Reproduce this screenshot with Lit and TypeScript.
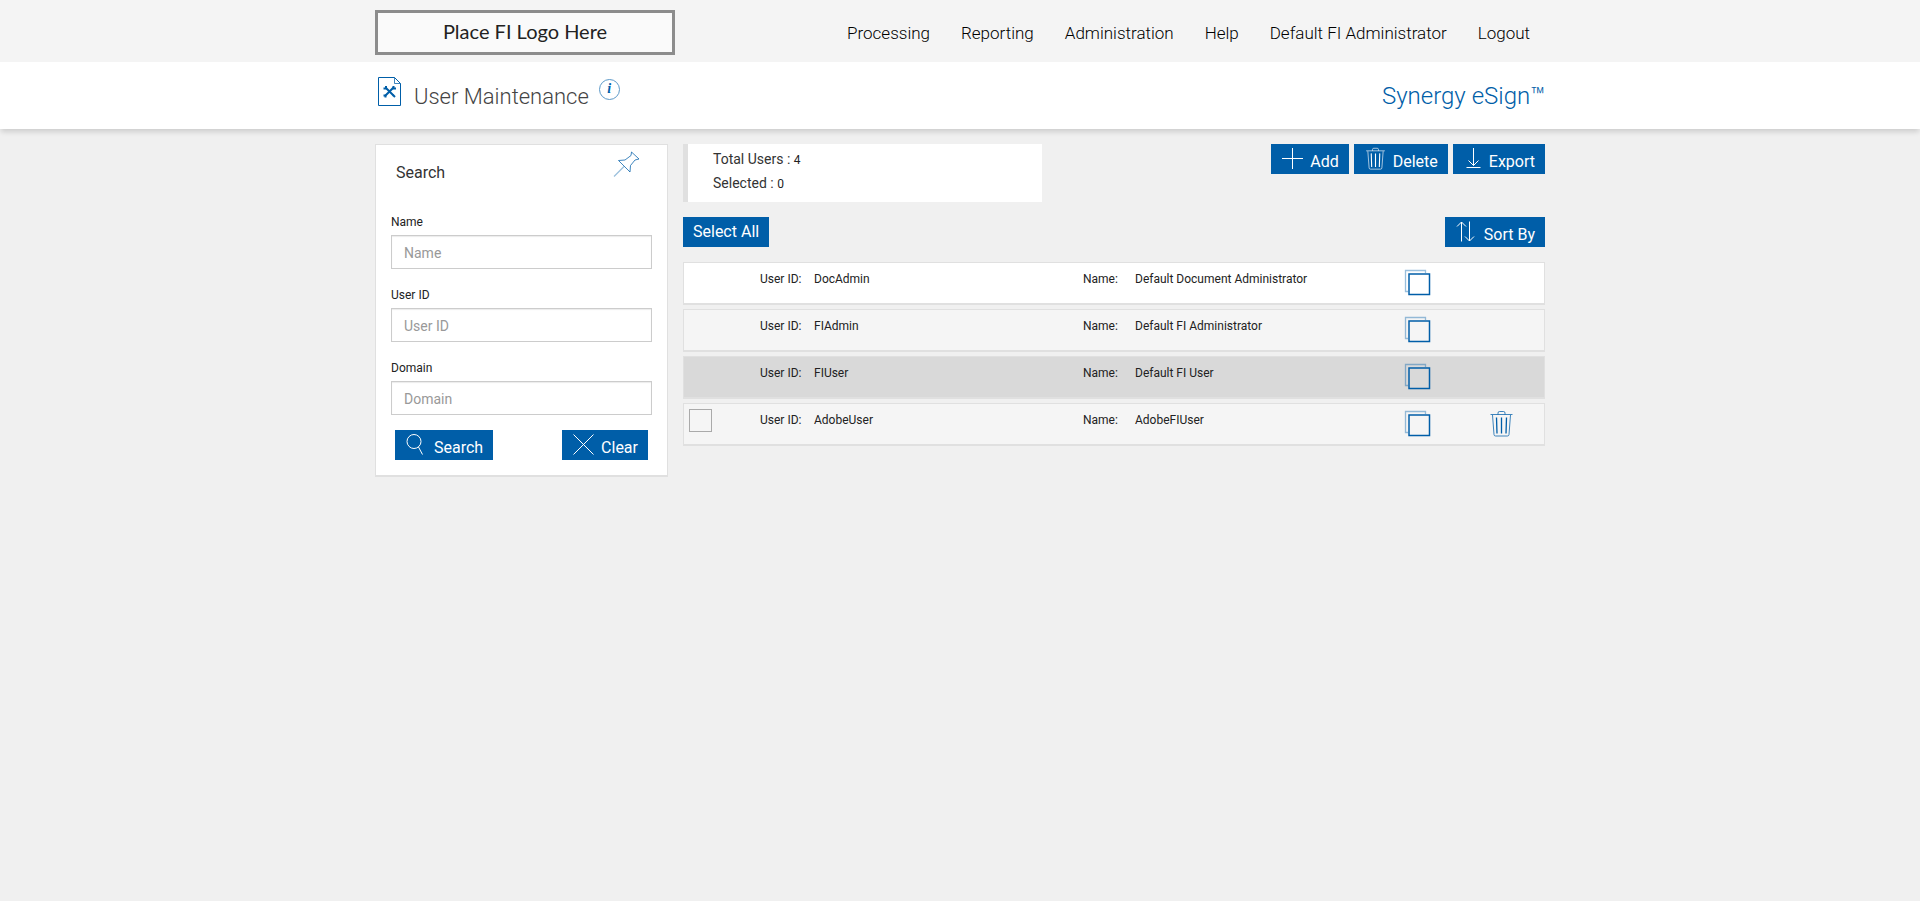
import { LitElement, html, css, svg, nothing } from "lit";
import { customElement, property, state } from "lit/decorators.js";
import { classMap } from "lit/directives/class-map.js";

interface User {
  id: string;
  name: string;
  removable: boolean;
  highlighted: boolean;
}

const USERS: User[] = [
  { id: "DocAdmin", name: "Default Document Administrator", removable: false, highlighted: false },
  { id: "FIAdmin", name: "Default FI Administrator", removable: false, highlighted: false },
  { id: "FIUser", name: "Default FI User", removable: false, highlighted: true },
  { id: "AdobeUser", name: "AdobeFIUser", removable: true, highlighted: false },
];

const GLYPHS = {
  plus: { box: "0 0 23 23", art: svg`<path d="M11.5 1v21M1 11.5h21"/>` },
  cross: { box: "0 0 23 23", art: svg`<path d="M1.5 1.5l20 20M21.500 1.500l-20 20"/>` },
  trash: {
    box: "0 0 23 27",
    art: svg`<path class="soft" d="M.5 4.500h22M8 4.500V3q0-1.500 1.500-1.500h4q1.500 0 1.500 1.500v1.500M2.500 5l1.500 19.500q.1 1.500 1.600 1.500h11.800q1.500 0 1.600-1.500L20.500 5"/><path class="strong" d="M6.500 7.500l.5 16M11.500 7.500v16M16.500 7.500l-.5 16"/>`,
  },
  download: { box: "0 0 23 23", art: svg`<path d="M10.500 1v17.500M5.500 13.500l5 5 5-5M3.500 20.500h14"/>` },
  sort: { box: "0 0 23 23", art: svg`<path d="M6.500 21.500V2M2 6.500L6.500 2l4.500 4.500M14.500 1.500V21M10 16.500l4.500 4.500 4.500-4.500"/>` },
  search: { box: "0 0 23 23", art: svg`<circle cx="9" cy="8.500" r="7"/><path d="M13.500 14l4 7.500"/>` },
  copy: {
    box: "0 0 27 27",
    art: svg`<path class="faint" d="M4 22.500H1.500V1.500h20V4"/><rect class="bold" x="5" y="5" width="20.500" height="20.500"/>`,
  },
  pin: {
    box: "0 0 27 27",
    art: svg`<path class="soft" d="M18.500 1l7.500 7-4 1-4.500 5.500-.5 6.500L5.500 9.500l6.500-.500L18 4.500z"/><path class="faint" d="M11 15.500L1 25.500"/>`,
  },
  page: {
    box: "0 0 24 30",
    art: svg`<path d="M.5 1.500h16l6 6v22H.5z"/><path class="soft" d="M16.500 1.500v6h6"/><path class="tool" d="M7.500 11.500l8 8M15.500 11.500l-8 8"/><path class="head" d="M5.500 12.500h2.500v-2.500M18 12.500h-2.500v-2.500M5.500 19.500h2v2M17 21l-2-2"/>`,
  },
};
type Glyph = keyof typeof GLYPHS;

@customElement("line-icon")
class LineIcon extends LitElement {
  @property() name: Glyph = "plus";
  @property({ type: Number }) width = 23;
  @property({ type: Number }) height = 23;

  static styles = css`
    :host { display: inline-flex; flex: none; }
    svg { display: block; fill: none; stroke: currentColor; stroke-width: 1; overflow: visible; }
    .soft { opacity: 0.75; }
    .faint { opacity: 0.4; stroke-width: 1.3; }
    .strong { stroke-width: 1.3; }
    .bold { stroke-width: 1.5; }
    .tool { stroke-width: 2; }
    .head { stroke-width: 2; }
  `;

  render() {
    const glyph = GLYPHS[this.name];
    return html`<svg width=${this.width} height=${this.height} viewBox=${glyph.box} aria-hidden="true">
      ${glyph.art}
    </svg>`;
  }
}

@customElement("app-root")
class AppRoot extends LitElement {
  @state() private selected = new Set<string>();

  static styles = css`
    :host {
      display: block;
      min-height: 100vh;
      background: #f0f0f0;
      color: #222;
      font-family: Roboto, "Liberation Sans", sans-serif;
      font-size: 12px;
      line-height: 16px;
    }
    * { box-sizing: border-box; }
    button, input { font: inherit; }
    button { cursor: pointer; }
    .container { width: 100%; max-width: 1170px; margin: 0 auto; }

    .top { background: #f4f4f4; }
    .top .container {
      display: flex;
      align-items: center;
      justify-content: space-between;
      padding: 10px 15px 7px 0;
    }
    .logo {
      width: 300px;
      height: 45px;
      border: 3px solid #8c8c8c;
      background: #fafafa;
      color: #222;
      font: 20px/36px Lato, sans-serif;
      text-align: center;
    }
    nav { display: flex; gap: 31px; }
    nav a { color: #000; font-size: 17px; font-weight: 300; line-height: 24px; text-decoration: none; }

    .title { background: #fff; box-shadow: 0 4px 5px -1px rgba(0, 0, 0, 0.14); }
    .title .container {
      display: flex;
      align-items: center;
      padding: 14px 0 13px;
      height: 67px;
    }
    .title line-icon { padding: 0 12px 10px 3px; }
    .title h1 { margin: 0; padding-top: 2px; color: #444; font-size: 22px; font-weight: 300; line-height: 40px; }
    .accent { color: #005ea8; }
    .info {
      margin: 0 auto 14px 10px;
      width: 21px;
      height: 21px;
      padding: 0;
      border: 1px solid #5c99c8;
      border-radius: 50%;
      background: none;
      color: #005ea8;
      font: italic bold 14px/18px "Liberation Serif", serif;
      text-align: center;
    }
    .brand { color: #005ea8; font-size: 24px; font-weight: 300; line-height: 40px; }

    .body { display: grid; grid-template-columns: 1fr 862px; gap: 15px; padding: 15px 0; align-items: start; }

    .panel {
      padding: 4px 15px 15px;
      border: 1px solid #e0e0e0;
      border-bottom-width: 2px;
      background: #fff;
    }
    .panel-head { display: flex; justify-content: space-between; padding: 2px 12px 26px 5px; }
    .panel h2 { margin: 10px 0 0; color: #333; font-size: 16px; font-weight: 400; line-height: 24px; }
    .field { display: block; margin-bottom: 15px; }
    .field span { display: block; padding: 1px 0 3px; line-height: 20px; }
    .field input {
      display: block;
      width: 100%;
      height: 34px;
      padding: 2px 12px 0;
      border: 1px solid #ccc;
      border-radius: 0;
      background: #fff;
      box-shadow: inset 0 1px 1px rgba(0, 0, 0, 0.08);
      font-size: 14px;
      outline: none;
    }
    .field input::placeholder { color: #999; opacity: 1; }
    .field input:focus { border-color: #005ea8; }
    .panel-actions { display: flex; justify-content: space-between; padding: 0 4px; }

    .btn {
      display: inline-flex;
      gap: 6px;
      height: 30px;
      padding: 0 10px;
      border: 0;
      background: #005ea8;
      color: #fff;
      font-size: 16px;
      line-height: 30px;
      white-space: nowrap;
    }
    .btn line-icon { padding-top: 3px; }
    .btn .low { padding-top: 3px; }
    .btn.tight { gap: 3px; }

    .summary { display: flex; justify-content: space-between; align-items: flex-start; }
    .stats {
      width: 359px;
      padding: 3px 25px 7px;
      border-left: 5px solid #e0e0e0;
      background: #fff;
      color: #333;
      font-size: 14px;
      line-height: 24px;
    }
    .stats b { color: #222; font-size: 12px; font-weight: 400; line-height: 12px; }
    .group { display: flex; gap: 5px; }
    .tools { display: flex; justify-content: space-between; padding: 15px 0; }

    .users { display: grid; gap: 4px; margin: 0; padding: 0; list-style: none; }
    .row {
      display: grid;
      grid-template-columns: 76px 54px 1fr 52px 1fr 86px 54px;
      height: 43px;
      border: 1px solid #e0e0e0;
      border-bottom-width: 2px;
      background: #f5f5f5;
    }
    .row:first-child { background: #fff; }
    .row.highlighted { background: #d9d9d9; }
    .row > span { padding-top: 8px; }
    .check {
      appearance: none;
      width: 23px;
      height: 23px;
      margin: 5px;
      border: 1px solid #aaa;
      background: transparent;
    }
    .check:checked { background: #005ea8; box-shadow: inset 0 0 0 3px #fff; }
    .icon-btn {
      justify-self: start;
      display: flex;
      align-self: start;
      margin-top: 6px;
      padding: 0;
      border: 0;
      background: none;
      color: #005ea8;
    }
  `;

  private toggle(id: string) {
    const next = new Set(this.selected);
    next.has(id) ? next.delete(id) : next.add(id);
    this.selected = next;
  }

  private selectAll() {
    this.selected = new Set(USERS.filter((u) => u.removable).map((u) => u.id));
  }

  private button(icon: Glyph, label: string, tight = false) {
    return html`<button type="button" class=${classMap({ btn: true, tight })}>
      <line-icon name=${icon}></line-icon><span class="low">${label}</span>
    </button>`;
  }

  private field(label: string) {
    return html`<label class="field"><span>${label}</span><input type="text" placeholder=${label} /></label>`;
  }

  private row(u: User) {
    return html`<li class=${classMap({ row: true, highlighted: u.highlighted })}>
      <div>
        ${u.removable
          ? html`<input
              class="check"
              type="checkbox"
              aria-label="Select ${u.id}"
              .checked=${this.selected.has(u.id)}
              @change=${() => this.toggle(u.id)}
            />`
          : nothing}
      </div>
      <span>User ID:</span><span>${u.id}</span>
      <span>Name:</span><span>${u.name}</span>
      <button type="button" class="icon-btn" aria-label="Copy ${u.id}">
        <line-icon name="copy" width="27" height="27"></line-icon>
      </button>
      ${u.removable
        ? html`<button type="button" class="icon-btn" aria-label="Delete ${u.id}">
            <line-icon name="trash" width="23" height="27"></line-icon>
          </button>`
        : nothing}
    </li>`;
  }

  render() {
    return html`
      <header class="top">
        <div class="container">
          <div class="logo">Place FI Logo Here</div>
          <nav>
            ${["Processing", "Reporting", "Administration", "Help", "Default FI Administrator", "Logout"].map(
              (t) => html`<a href="#">${t}</a>`
            )}
          </nav>
        </div>
      </header>
      <div class="title">
        <div class="container">
          <line-icon class="accent" name="page" width="24" height="30"></line-icon>
          <h1>User Maintenance</h1>
          <button type="button" class="info" aria-label="Information">i</button>
          <div class="brand">Synergy eSign™</div>
        </div>
      </div>
      <div class="container body">
        <form class="panel" @submit=${(e: Event) => e.preventDefault()}>
          <div class="panel-head">
            <h2>Search</h2>
            <line-icon class="accent" name="pin" width="27" height="27"></line-icon>
          </div>
          ${this.field("Name")} ${this.field("User ID")} ${this.field("Domain")}
          <div class="panel-actions">${this.button("search", "Search")} ${this.button("cross", "Clear")}</div>
        </form>
        <main>
          <div class="summary">
            <div class="stats">
              <div>Total Users : <b>${USERS.length}</b></div>
              <div>Selected : <b>${this.selected.size}</b></div>
            </div>
            <div class="group">
              ${this.button("plus", "Add")} ${this.button("trash", "Delete")} ${this.button("download", "Export", true)}
            </div>
          </div>
          <div class="tools">
            <button type="button" class="btn" @click=${this.selectAll}>Select All</button>
            ${this.button("sort", "Sort By")}
          </div>
          <ul class="users">
            ${USERS.map((u) => this.row(u))}
          </ul>
        </main>
      </div>
    `;
  }
}
